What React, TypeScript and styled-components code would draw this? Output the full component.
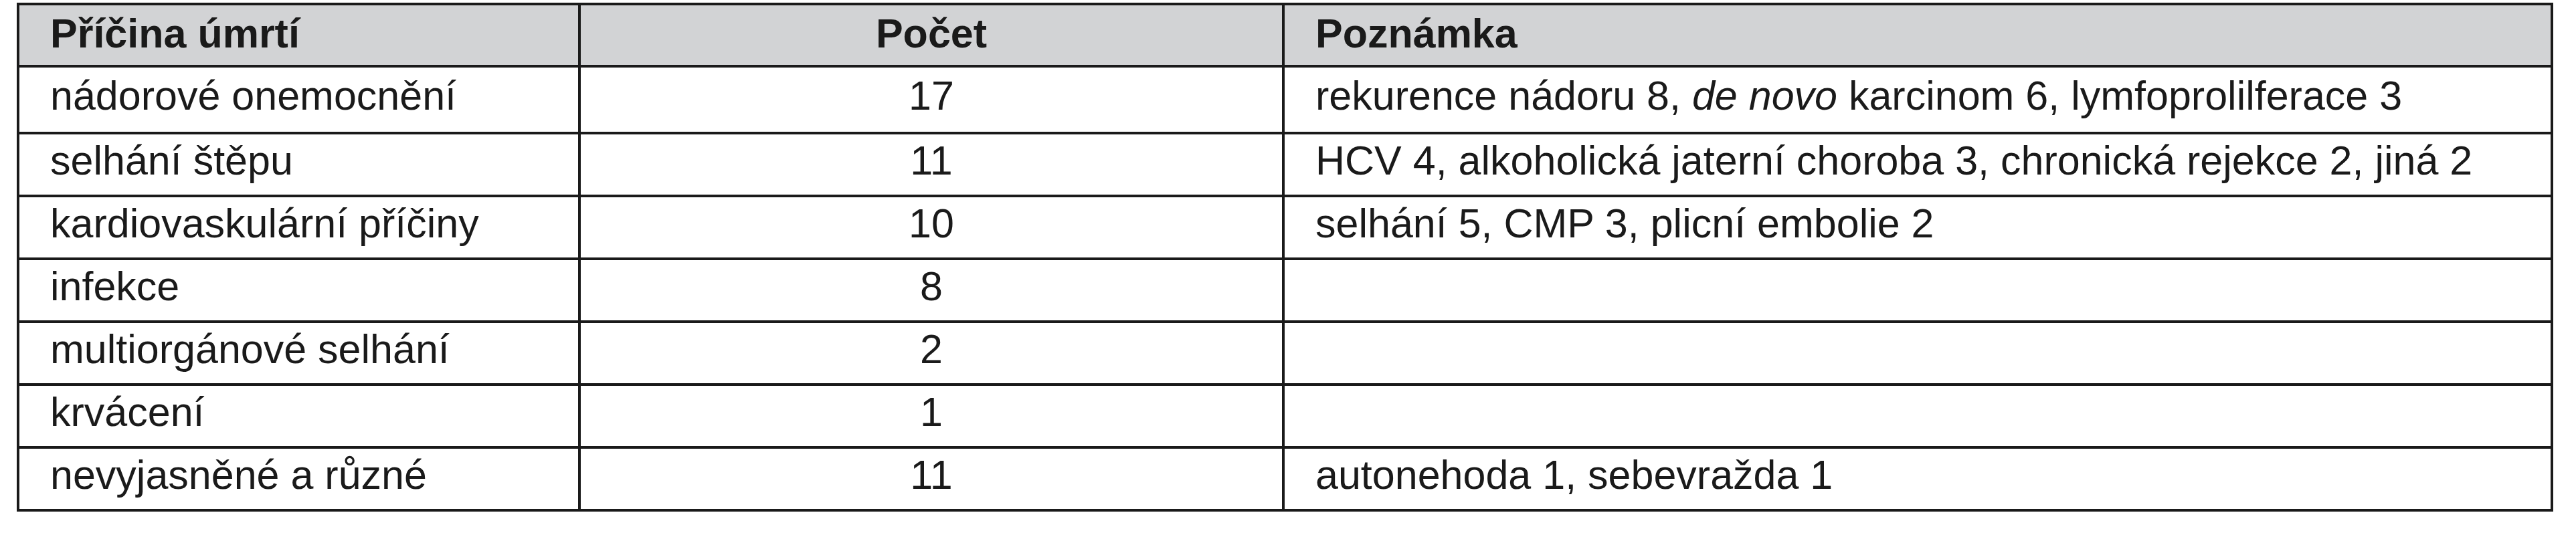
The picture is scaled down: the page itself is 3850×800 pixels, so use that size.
import React from 'react';
import styled, { createGlobalStyle } from 'styled-components';

type Row = {
  cause: string;
  count: number;
  note?: React.ReactNode;
  tall?: boolean;
};

const ROWS: Row[] = [
  {
    cause: 'nádorové onemocnění',
    count: 17,
    note: (
      <>
        rekurence nádoru 8, <em>de novo</em> karcinom 6, lymfoprolilferace 3
      </>
    ),
    tall: true,
  },
  {
    cause: 'selhání štěpu',
    count: 11,
    note: 'HCV 4, alkoholická jaterní choroba 3, chronická rejekce 2, jiná 2',
  },
  {
    cause: 'kardiovaskulární příčiny',
    count: 10,
    note: 'selhání 5, CMP 3, plicní embolie 2',
  },
  { cause: 'infekce', count: 8 },
  { cause: 'multiorgánové selhání', count: 2 },
  { cause: 'krvácení', count: 1 },
  { cause: 'nevyjasněné a různé', count: 11, note: 'autonehoda 1, sebevražda 1' },
];

const App = () => (
  <>
    <GlobalStyle />
    <Page>
      <Grid>
        <HeadCell>
          <span>Příčina úmrtí</span>
        </HeadCell>
        <HeadCell $center>
          <span>Počet</span>
        </HeadCell>
        <HeadCell>
          <span>Poznámka</span>
        </HeadCell>
        {ROWS.map((row) => (
          <React.Fragment key={row.cause}>
            <Cell $tall={row.tall}>
              <span>{row.cause}</span>
            </Cell>
            <Cell $tall={row.tall} $center>
              <span>{row.count}</span>
            </Cell>
            <Cell $tall={row.tall}>
              <span>{row.note}</span>
            </Cell>
          </React.Fragment>
        ))}
      </Grid>
    </Page>
  </>
);

export default App;

const GlobalStyle = createGlobalStyle`
  html, body {
    margin: 0;
    background: #ffffff;
  }
`;

const Page = styled.div`
  padding: 4px 0 0 25px;
  font-family: 'Liberation Sans', Arial, sans-serif;
  color: #1a1a1a;
`;

// Table
const Grid = styled.div`
  display: grid;
  grid-template-columns: 839px 1052px 1896px;
  width: max-content;
  border-left: 4px solid #1a1a1a;
  border-top: 4px solid #1a1a1a;
`;

const BaseCell = styled.div<{ $center?: boolean }>`
  box-sizing: border-box;
  display: flex;
  align-items: center;
  justify-content: ${(p) => (p.$center ? 'center' : 'flex-start')};
  padding: 0 0 0 ${(p) => (p.$center ? '0' : '46px')};
  border-right: 4px solid #1a1a1a;
  border-bottom: 4px solid #1a1a1a;
  font-size: 61px;
  line-height: 1.15;
  white-space: nowrap;

  em {
    font-style: italic;
  }
`;

const HeadCell = styled(BaseCell)`
  height: 93px;
  padding-bottom: 4px;
  background: #d2d3d5;
  font-weight: 700;
`;

const Cell = styled(BaseCell)<{ $tall?: boolean }>`
  height: ${(p) => (p.$tall ? '100px' : '94px')};
  padding-bottom: 12px;
`;
